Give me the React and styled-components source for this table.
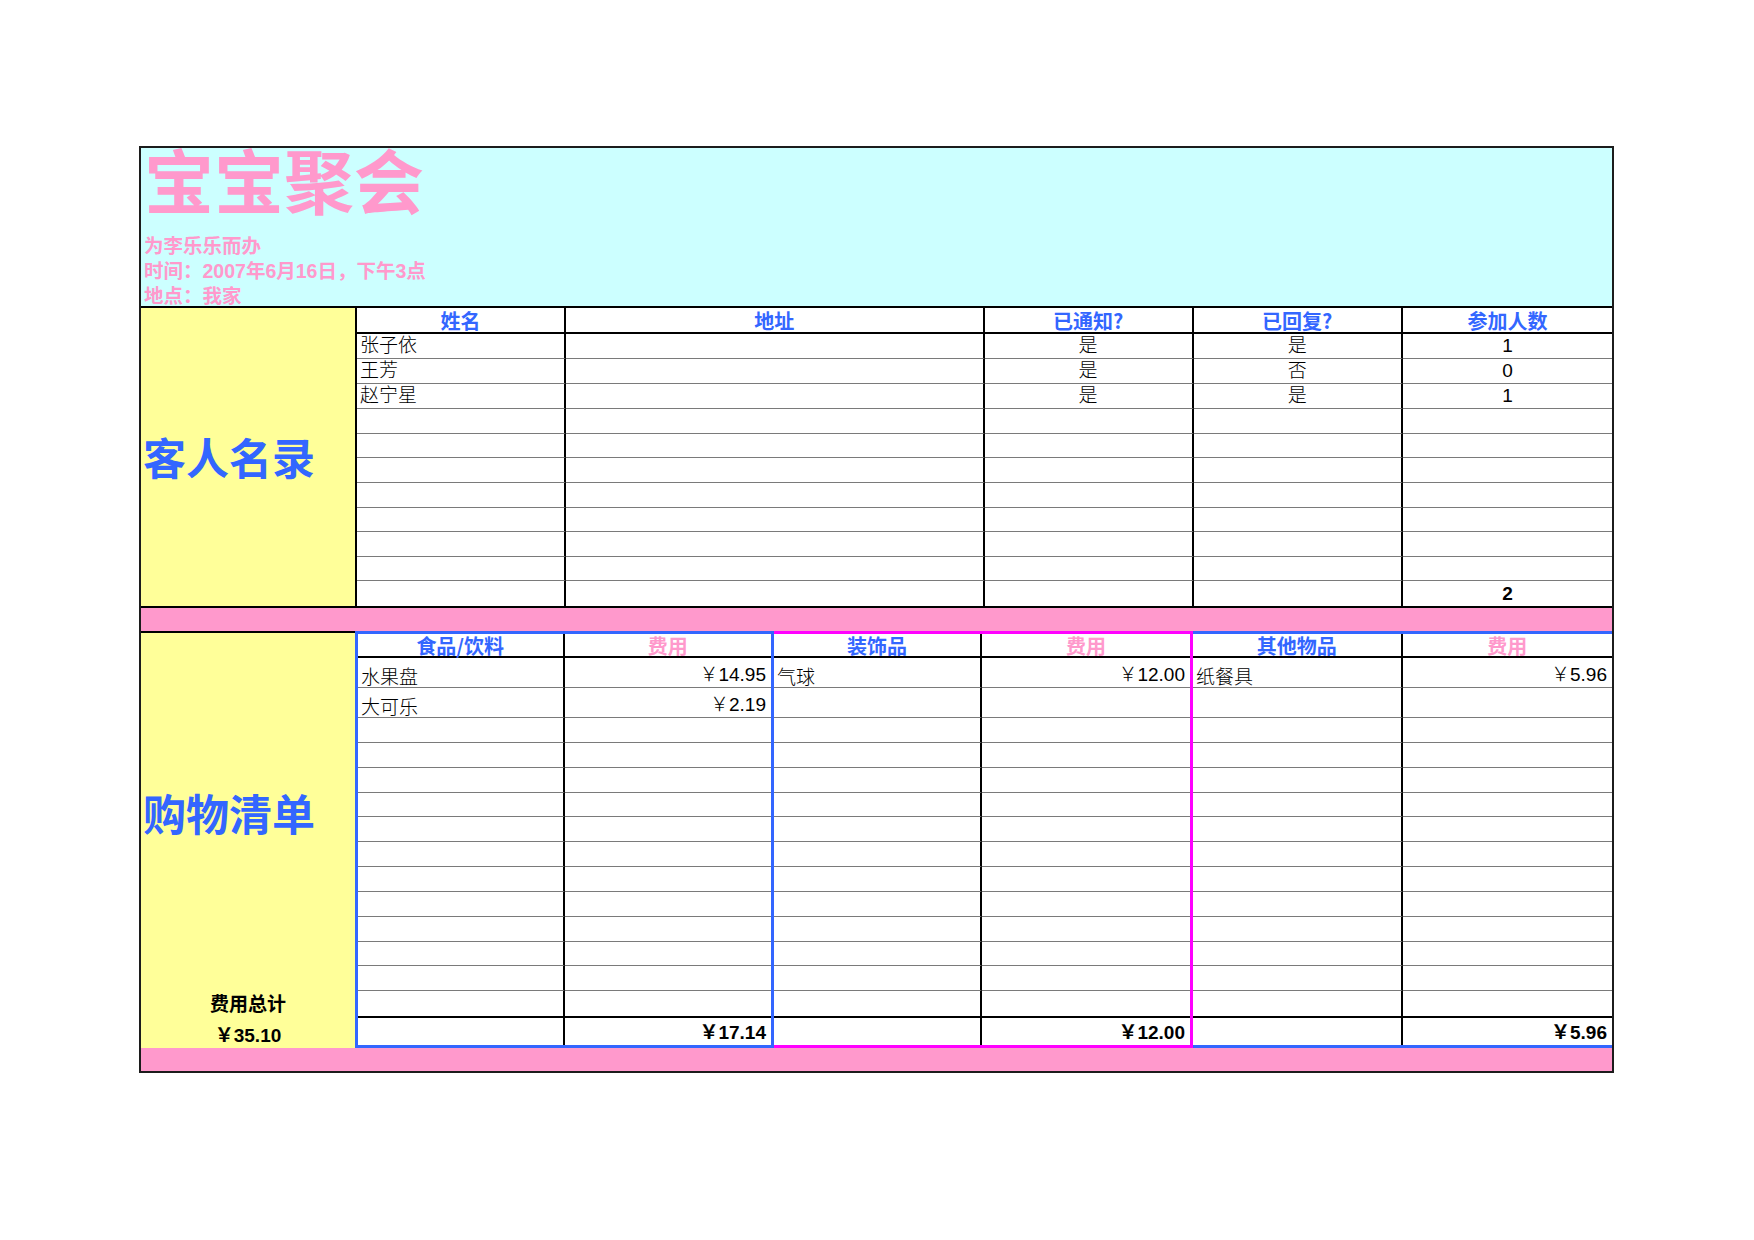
import styled, { createGlobalStyle } from 'styled-components'

const GlobalStyle = createGlobalStyle`
  * { box-sizing: border-box; }
  html, body { margin: 0; padding: 0; background: #ffffff; }
  body {
    font-family: "Liberation Sans", "Noto Sans CJK SC", sans-serif;
    color: #000;
  }
`

const Page = styled.div`
  width: 1754px;
  height: 1240px;
  padding: 146px 0 0 139px;
`

const Sheet = styled.div`
  width: 1475px;
  border: 2px solid #1c1c1c;
  display: flex;
  flex-direction: column;
`

const Banner = styled.div`
  height: 160px;
  background: #ccffff;
  border-bottom: 2px solid #000;
  padding-left: 3px;
  color: #ff99cc;
  display: flex;
  flex-direction: column;
`

const Title = styled.h1`
  margin: 0;
  font-size: 70px;
  line-height: 62px;
  font-weight: 700;
  font-family: "Noto Sans CJK SC", sans-serif;
`

const Details = styled.div`
  margin-top: 24px;
  font-size: 19.5px;
  line-height: 25px;
  font-weight: 700;
`

const GuestGrid = styled.div`
  display: grid;
  grid-template-columns: 216px repeat(6, 1fr);
  grid-template-rows: 26px repeat(11, 1fr);
  height: 298px;
`

const Side = styled.div`
  grid-column: 1;
  grid-row: 1 / span 12;
  background: #ffff99;
  border-right: 2px solid #000;
  display: flex;
  align-items: center;
  padding-left: 2px;
`

const SideTitle = styled.div`
  font-family: "Noto Sans CJK SC", sans-serif;
  font-size: 43px;
  font-weight: 700;
  color: #3366ff;
  line-height: 1.2;
`

const Cell = styled.div`
  grid-column: span ${p => p.$span || 1};
  display: flex;
  align-items: ${p => (p.$bottom ? 'flex-end' : 'center')};
  justify-content: ${p =>
    p.$align === 'center' ? 'center' : p.$align === 'right' ? 'flex-end' : 'flex-start'};
  padding: 0 ${p => (p.$align === 'right' ? 5 : 3)}px 0 3px;
  border-right: ${p => (p.$edge ? 'none' : '2px solid #000')};
  border-bottom: ${p => (p.$end ? 'none' : '1px solid #7a7a7a')};
  font-size: 19px;
  line-height: ${p => (p.$low ? 19 : 24)}px;
  font-weight: ${p => (p.$bold ? 700 : 300)};
  white-space: nowrap;
`

const HeadCell = styled(Cell)`
  justify-content: center;
  border-bottom: 2px solid #000;
  padding-top: 1px;
  font-family: "Noto Sans CJK SC", sans-serif;
  font-size: 20px;
  line-height: 20px;
  font-weight: 700;
  color: ${p => p.$tone || '#3366ff'};
`

const TotalCell = styled(Cell)`
  border-top: 2px solid #000;
  font-weight: 700;
`

const Band = styled.div`
  height: ${p => p.$h}px;
  background: #ff99cc;
  border-top: ${p => (p.$ruled ? '2px solid #000' : 'none')};
`

const ShopRow = styled.div`
  display: grid;
  grid-template-columns: 214px repeat(3, 1fr);
  height: 417px;
`

const ShopSide = styled.div`
  background: #ffff99;
  border-top: 2px solid #000;
  display: flex;
  flex-direction: column;
`

const SideHead = styled.div`
  flex: 1;
  display: flex;
  align-items: center;
  padding-left: 2px;
`

const SideLine = styled.div`
  height: ${p => p.$h}px;
  display: flex;
  justify-content: center;
  align-items: ${p => (p.$bottom ? 'flex-end' : 'center')};
  font-size: 19px;
  line-height: 24px;
  font-weight: 700;
`

const Group = styled.div`
  display: grid;
  grid-template-columns: 1fr 1fr;
  grid-template-rows: 24px 30px 30px repeat(12, 1fr) 29px;
  border-style: solid;
  border-color: ${p => p.$color};
  border-width: 3px ${p => (p.$right ? 3 : 0)}px 3px ${p => (p.$left ? 3 : 0)}px;
`

const guests = [
  ['张子依', '是', '是', '1'],
  ['王芳', '是', '否', '0'],
  ['赵宁星', '是', '是', '1'],
  ...Array.from({ length: 7 }, () => ['', '', '', '']),
]

const groups = [
  {
    head: '食品/饮料',
    color: '#3366ff',
    left: true,
    right: true,
    items: [['水果盘', '￥14.95'], ['大可乐', '￥2.19']],
    total: '￥17.14',
  },
  {
    head: '装饰品',
    color: '#ff00ff',
    left: false,
    right: true,
    items: [['气球', '￥12.00']],
    total: '￥12.00',
  },
  {
    head: '其他物品',
    color: '#3366ff',
    left: false,
    right: false,
    items: [['纸餐具', '￥5.96']],
    total: '￥5.96',
  },
]

const ShopGroup = ({ group }) => {
  const rows = Array.from({ length: 14 }, (_, i) => group.items[i] || ['', ''])
  return (
    <Group $color={group.color} $left={group.left} $right={group.right}>
      <HeadCell>{group.head}</HeadCell>
      <HeadCell $edge $tone="#ff99cc">费用</HeadCell>
      {rows.map(([name, cost], i) => [
        <Cell key={`n${i}`} $bottom $low $end={i === 13}>{name}</Cell>,
        <Cell key={`c${i}`} $bottom $edge $align="right" $end={i === 13}>{cost}</Cell>,
      ])}
      <TotalCell $bottom $end />
      <TotalCell $bottom $edge $end $align="right">{group.total}</TotalCell>
    </Group>
  )
}

const App = () => {
  return (
    <Page>
      <GlobalStyle />
      <Sheet>
        <Banner>
          <Title>宝宝聚会</Title>
          <Details>
            <div>为李乐乐而办</div>
            <div>时间：2007年6月16日，下午3点</div>
            <div>地点：我家</div>
          </Details>
        </Banner>

        <GuestGrid>
          <Side>
            <SideTitle>客人名录</SideTitle>
          </Side>
          <HeadCell>姓名</HeadCell>
          <HeadCell $span={2}>地址</HeadCell>
          <HeadCell>已通知?</HeadCell>
          <HeadCell>已回复?</HeadCell>
          <HeadCell $edge>参加人数</HeadCell>
          {guests.map(([name, told, replied, count], i) => [
            <Cell key={`g${i}a`}>{name}</Cell>,
            <Cell key={`g${i}b`} $span={2} />,
            <Cell key={`g${i}c`} $align="center">{told}</Cell>,
            <Cell key={`g${i}d`} $align="center">{replied}</Cell>,
            <Cell key={`g${i}e`} $align="center" $edge>{count}</Cell>,
          ])}
          <Cell $end />
          <Cell $end $span={2} />
          <Cell $end />
          <Cell $end />
          <Cell $end $edge $align="center" $bold>2</Cell>
        </GuestGrid>

        <Band $h={25} $ruled />

        <ShopRow>
          <ShopSide>
            <SideHead>
              <SideTitle>购物清单</SideTitle>
            </SideHead>
            <SideLine $h={25}>费用总计</SideLine>
            <SideLine $h={31} $bottom>￥35.10</SideLine>
          </ShopSide>
          {groups.map(g => (
            <ShopGroup key={g.head} group={g} />
          ))}
        </ShopRow>

        <Band $h={23} />
      </Sheet>
    </Page>
  )
}

export default App
